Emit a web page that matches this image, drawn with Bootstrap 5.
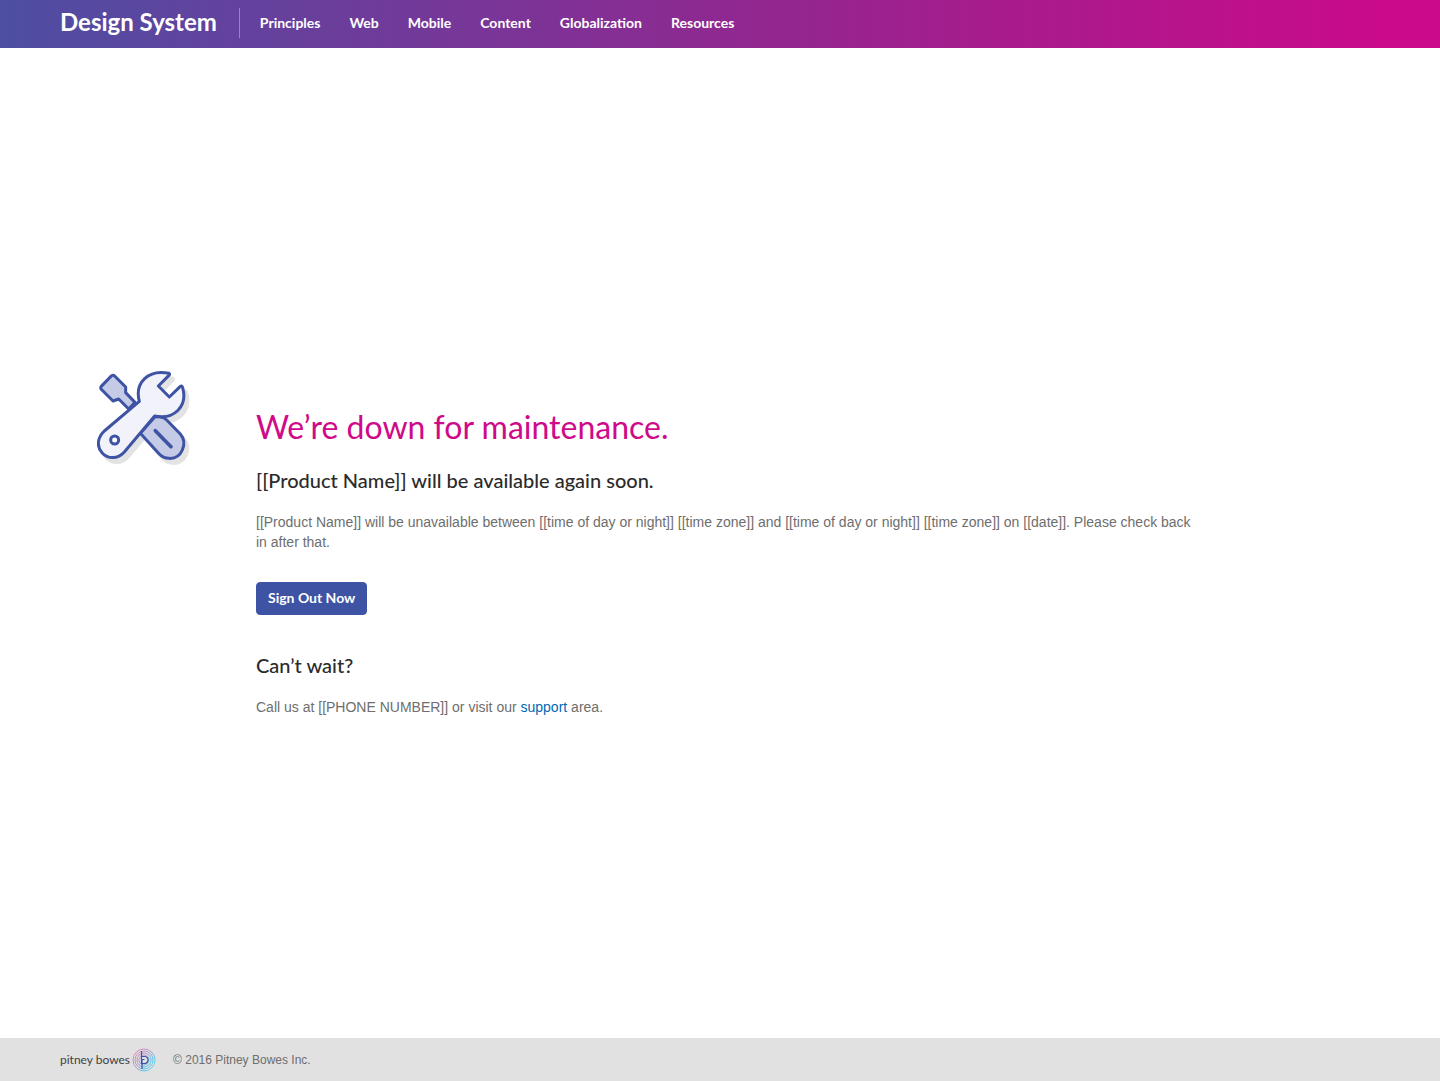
<!DOCTYPE html>
<html lang="en">
<head>
<meta charset="utf-8">
<meta name="viewport" content="width=device-width, initial-scale=1">
<title>Design System – Maintenance</title>
<link href="https://cdn.jsdelivr.net/npm/bootstrap@5.3.0/dist/css/bootstrap.min.css" rel="stylesheet">
<style>
body { font-family: "Liberation Sans", Arial, sans-serif; font-size: 14px; line-height: 20px; color: #6e6e6e; }
.ds-face { font-family: Lato, "Open Sans", sans-serif; }
.ds-header { height: 48px; padding: 0 60px 2px; background: linear-gradient(90deg, #4e4ea2 0%, #713a9a 28%, #93268f 54%, #cb0a89 97%); }
.ds-brand { font-size: 24px; line-height: 28px; font-weight: 700; padding: 0 22px 2px 0; margin: 0; border-right: 1px solid rgba(255,255,255,.35); }
.ds-links { gap: 29px; margin-left: 20px; }
.ds-header .ds-links .nav-link { font-size: 14px; line-height: 20px; font-weight: 700; color: #fff; padding: 0; }
.ds-panel { padding: 0 60px; }
.ds-icon { width: 196px; padding-left: 37px; }
.ds-copy { max-width: 945px; padding-top: 37px; }
h1 { font-size: 32px; line-height: 40px; font-weight: 400; color: #cf0989; margin-bottom: 20px; }
h2 { font-size: 20px; line-height: 26px; font-weight: 500; color: #2b2b2b; margin-bottom: 19px; }
.ds-copy p { margin: 0; }
.ds-copy a { color: #0068b3; text-decoration: none; }
.ds-action { margin: 30px 0 37px; font-size: 14px; line-height: 21px; font-weight: 700; padding: 4px 11px 6px; border-radius: 4px; --bs-btn-color: #fff; --bs-btn-bg: #3e53a4; --bs-btn-border-color: #3e53a4; --bs-btn-hover-color: #fff; --bs-btn-hover-bg: #33458a; }
.ds-footer { height: 43px; padding: 0 60px; background: #e1e1e1; font-size: 12px; gap: 17px; }
.ds-mark { font-size: 12px; line-height: 20px; color: #414042; gap: 2px; }
</style>
</head>
<body class="d-flex flex-column min-vh-100">
<header class="navbar navbar-expand flex-nowrap justify-content-start ds-header ds-face">
  <a class="navbar-brand text-white ds-brand" href="#">Design System</a>
  <nav aria-label="Main">
    <ul class="navbar-nav ds-links">
      <li class="nav-item"><a class="nav-link" href="#">Principles</a></li>
      <li class="nav-item"><a class="nav-link" href="#">Web</a></li>
      <li class="nav-item"><a class="nav-link" href="#">Mobile</a></li>
      <li class="nav-item"><a class="nav-link" href="#">Content</a></li>
      <li class="nav-item"><a class="nav-link" href="#">Globalization</a></li>
      <li class="nav-item"><a class="nav-link" href="#">Resources</a></li>
    </ul>
  </nav>
</header>
<main class="flex-grow-1 d-flex align-items-center ds-panel">
  <div class="d-flex w-100">
    <div class="flex-shrink-0 ds-icon">
      <svg width="93" height="96" viewBox="52 30 279 288" fill="none" stroke="#3e53a4" stroke-width="9" stroke-linejoin="round" stroke-linecap="round" aria-hidden="true">
        <g fill="#e3e3e3" stroke="#e3e3e3" transform="translate(12 15)">
          <path d="M183 220L240 170Q253 170 261 180L302 222Q320 243 308 270Q296 297 268 295Q250 294 238 281Z"/>
          <path d="M179 124C164 67 207 27 268 40Q271 43 268 46L236 78L269 111L302 79Q307 76 309 83C325 140 282 180 225 168L134 276C114 298 85 298 67 278C48 256 56 230 74 213Z"/>
        </g>
        <path fill="#c5cae6" d="M96 47Q101 44 105 48L138 81V98L166 127L147 147L117 117L100 123L64 87Q62 84 64 80Z"/>
        <path fill="#c5cae6" d="M182 220L225 171Q249 167 261 180L302 222Q320 243 308 270Q296 297 268 295Q250 294 238 281Z"/>
        <path stroke-width="11" d="M227 212L274 260"/>
        <path fill="#f2f3fa" d="M179 124C164 67 207 27 268 40Q271 43 268 46L236 78L269 111L302 79Q307 76 309 83C325 140 282 180 225 168L134 276C114 298 85 298 67 278C48 256 56 230 74 213Z"/>
        <circle cx="105" cy="240" r="12" stroke-width="9" fill="#fff"/>
      </svg>
    </div>
    <div class="ds-copy">
      <h1 class="ds-face">We’re down for maintenance.</h1>
      <h2 class="ds-face">[[Product Name]] will be available again soon.</h2>
      <p>[[Product Name]] will be unavailable between [[time of day or night]] [[time zone]] and [[time of day or night]] [[time zone]] on [[date]]. Please check back in after that.</p>
      <button type="button" class="btn ds-action ds-face">Sign Out Now</button>
      <h2 class="ds-face">Can’t wait?</h2>
      <p>Call us at [[PHONE NUMBER]] or visit our <a href="#">support</a> area.</p>
    </div>
  </div>
</main>
<footer class="d-flex align-items-center ds-footer">
  <div class="d-flex align-items-center ds-mark ds-face">
    <span>pitney bowes</span>
    <svg width="24" height="24" viewBox="0 0 24 24" fill="none" aria-hidden="true">
      <defs><linearGradient id="rings" x1="3" y1="4" x2="21" y2="20" gradientUnits="userSpaceOnUse"><stop stop-color="#e287b8"/><stop offset=".45" stop-color="#a899cf"/><stop offset=".75" stop-color="#5bc5e8"/><stop offset="1" stop-color="#6fd3ee"/></linearGradient></defs>
      <g stroke="url(#rings)"><circle cx="12" cy="12" r="11"/><circle cx="12" cy="12" r="9"/><circle cx="12" cy="12" r="7"/><circle cx="12" cy="12" r="5"/></g>
      <path stroke="#3e53a4" stroke-width="1.2" d="M9.5 3V15.500H12.500A3.500 3.500 0 0 0 12.500 8.500H9.500M10 21V11.500H12.500"/>
    </svg>
  </div>
  <span>© 2016 Pitney Bowes Inc.</span>
</footer>
<script src="https://cdn.jsdelivr.net/npm/bootstrap@5.3.0/dist/js/bootstrap.bundle.min.js"></script>
</body>
</html>
